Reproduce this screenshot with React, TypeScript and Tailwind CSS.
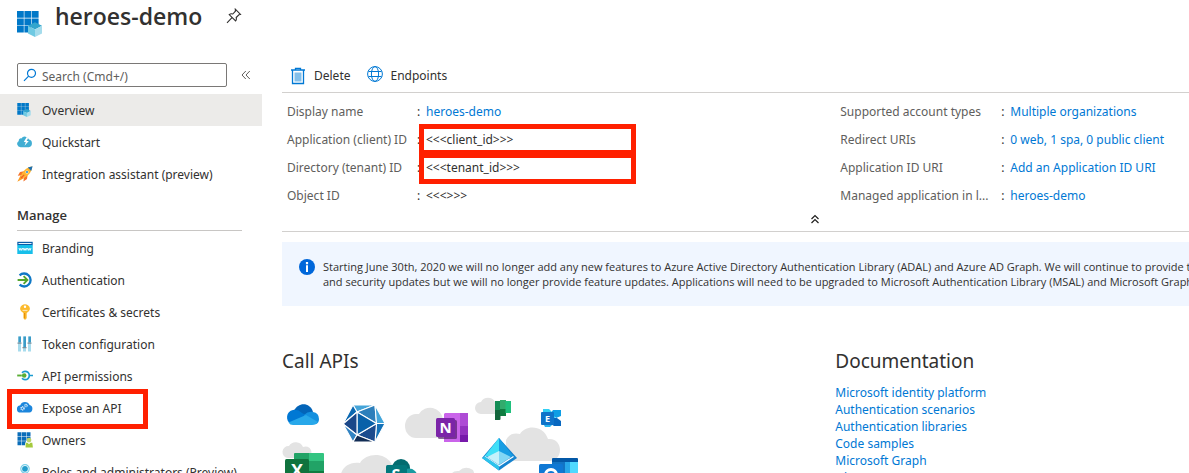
import type { ReactNode } from "react";

function AppGrid({ className }: { className?: string }) {
  return (
    <svg viewBox="0 0 25 26" className={className} aria-hidden="true">
      <path fill="#0078c8" d="M0 0h6.800v6.800H0zM7.400 0h6.800v6.800H7.400zM14.800 0h6.800v6.800h-6.800zM0 7.400h6.800v6.800H0zM7.400 7.400h6.800v6.800H7.400zM14.800 7.400h6.800v6.800h-6.800zM0 14.800h6.800v6.800H0zM7.400 14.800h6.800v6.800H7.400z" />
      <path fill="#32a5cd" d="M18 11.200l7 3.600-7 3.600-7-3.600z" />
      <path fill="#6fc9e2" d="M11 14.800l7 3.600V26l-7-3.400z" />
      <path fill="#a5dcec" d="M25 14.800l-7 3.600V26l7-3.400z" />
    </svg>
  );
}

function QuickstartIcon() {
  return (
    <svg viewBox="0 0 16 16" className="size-4" aria-hidden="true">
      <path fill="#41aed3" d="M3.600 13.200A3.400 3.400 0 0 1 1.800 6.900 2.100 2.100 0 0 1 4.300 4.400 4.400 4.400 0 0 1 12 5.600a3.900 3.900 0 0 1-.2 7.600z" />
      <path fill="#fff" d="M9.500 3.200L6.800 8h2l-1.200 3.800L11.800 7H9.600l1.900-3.800z" />
    </svg>
  );
}

function RocketIcon() {
  return (
    <svg viewBox="0 0 16 16" className="size-4" aria-hidden="true">
      <path fill="#f5742c" d="M7 5.200L3 6 .8 9.800l4-.6zM10.600 9L10 13l-3.600 2.600.6-4z" />
      <path fill="#fb9d24" d="M3.800 9L.3 15.800 7.400 12z" />
      <path fill="#ffb52f" d="M15.200.6C10 1.300 6.400 4.400 4 9.300l2.800 2.800C11.600 9.700 14.600 6 15.200.6z" />
      <path fill="#1f6fae" d="M15.600.2l-4.800 1.400 3.400 3.400z" />
      <circle cx="10" cy="6" r="1.500" fill="#fff" />
      <circle cx="10" cy="6" r="1" fill="#1c86ca" />
      <path stroke="#f0592b" strokeWidth="1.200" d="M4 12.200l3.200-3.400" />
    </svg>
  );
}

function BrandingIcon() {
  return (
    <svg viewBox="0 0 16 16" className="size-4" aria-hidden="true">
      <path fill="#0b5ca8" d="M.3 1.800h15.400v3.500H.3z" />
      <path fill="#e8f4fb" d="M1.500 3h13v1h-13z" />
      <path fill="#17bfea" d="M.3 5h15.400v9H.3z" />
      <path fill="none" stroke="#fff" strokeWidth=".9" d="M2 8l.9 2.400.9-2.100.9 2.100L5.600 8M6.200 8l.9 2.400L8 8.300l.9 2.100.9-2.400M10.400 8l.9 2.400.9-2.100.9 2.100.9-2.400" />
    </svg>
  );
}

function AuthIcon() {
  return (
    <svg viewBox="0 0 16 16" className="size-4" fill="none" aria-hidden="true">
      <path stroke="#0f78c6" strokeWidth="2.300" d="M2.600 3.300a6.500 6.500 0 1 1 0 9.400" />
      <path stroke="#54a52d" strokeWidth="1.900" d="M.6 8h9.600M6.600 4.200L10.400 8l-3.800 3.800" />
    </svg>
  );
}

function KeyIcon() {
  return (
    <svg viewBox="0 0 16 16" className="size-4" aria-hidden="true">
      <path fill="#fcba2d" fillRule="evenodd" d="M5 1.200Q8 -.8 11 1.200Q13.600 3.300 12.600 6Q12 7.500 9.700 8.900V14.200L8 16 6.400 14.300V8.900Q4 7.500 3.400 6Q2.400 3.300 5 1.200ZM8 1.600a1.200 1.200 0 1 0 0 2.400 1.200 1.200 0 0 0 0-2.400Z" />
      <path fill="#fff" d="M5.500 5.900h5v.7h-5z" />
      <path fill="#e08600" d="M7.200 9h.9v5.300h-.9z" />
    </svg>
  );
}

function TokenIcon() {
  return (
    <svg viewBox="0 0 16 16" className="size-4" aria-hidden="true">
      <path fill="#a8dced" d="M1 .5h3v15H1zM6 .5h3v15H6zM11 .5h3v15h-3z" />
      <path fill="#3c9cc8" d="M1.500.5H4v6H1.500zM6.500.5H9v10.800H6.500zM11.500.5H14v6h-2.500z" />
      <path fill="#7c8f9c" d="M.5 6.500h4v1.200h-4zM5.500 11h4v1.200h-4zM10.500 6.500h4v1.200h-4z" />
    </svg>
  );
}

function PermissionsIcon() {
  return (
    <svg viewBox="0 0 16 16" className="size-4" fill="none" aria-hidden="true">
      <path stroke="#1b9bd0" strokeWidth="1.700" d="M5 4.700a4.200 4.200 0 1 1 0 5.600M12 7.500h4" />
      <path stroke="#5aae35" strokeWidth="1.900" d="M.2 7.500h4.600" />
      <circle cx="7.200" cy="7.500" r="2.300" fill="#5aae35" />
    </svg>
  );
}

function ExposeIcon() {
  return (
    <svg viewBox="0 0 16 16" className="size-4" aria-hidden="true">
      <path fill="#1c86dc" d="M3.700 12.500A3.600 3.600 0 0 1 3.300 5.300 5 5 0 0 1 12.600 5.100 3.800 3.800 0 0 1 12.300 12.500z" />
      <circle cx="5.500" cy="8.400" r="1.500" fill="none" stroke="#fff" strokeWidth="1.300" strokeDasharray="1 .5" />
      <circle cx="9" cy="5.500" r="1.200" fill="none" stroke="#cde9fa" strokeWidth="1.200" strokeDasharray=".9 .4" />
    </svg>
  );
}

function OwnersIcon() {
  return (
    <svg viewBox="0 0 16 16" className="size-4" aria-hidden="true">
      <path fill="#0a6db9" d="M.5.300h4v4h-4zM5 .3h4v4H5zM9.500.3h4v4h-4zM.5 4.800h4v4h-4zM5 4.800h4v4H5zM9.500 4.800h4v4h-4zM.5 9.300h4v4h-4zM5 9.300h4v4H5z" />
      <path fill="#fff" d="M8 15.500V11l2-2 5 1 1 5.500z" />
      <circle cx="12" cy="8.100" r="2.400" fill="#b9d36a" />
      <path fill="#a5ca3d" d="M8.600 10.800h2L12 12.200l1.400-1.400h1.900l.6 4.700H8.600z" />
    </svg>
  );
}

function RolesIcon() {
  return (
    <svg viewBox="0 0 16 16" className="size-4" aria-hidden="true">
      <circle cx="8" cy="4.800" r="4.200" fill="none" stroke="#79cfe8" strokeWidth="1.200" />
      <circle cx="8" cy="4.800" r="2.900" fill="#229dcc" />
      <path fill="#50bfe0" d="M3 16c0-5 2-7 5-7s5 2 5 7z" />
    </svg>
  );
}

type NavEntry = { label: string; icon: ReactNode; active?: boolean; marked?: boolean };

const topNav: NavEntry[] = [
  { label: "Overview", icon: <AppGrid className="size-[14px]" />, active: true },
  { label: "Quickstart", icon: <QuickstartIcon /> },
  { label: "Integration assistant (preview)", icon: <RocketIcon /> },
];

const manageNav: NavEntry[] = [
  { label: "Branding", icon: <BrandingIcon /> },
  { label: "Authentication", icon: <AuthIcon /> },
  { label: "Certificates & secrets", icon: <KeyIcon /> },
  { label: "Token configuration", icon: <TokenIcon /> },
  { label: "API permissions", icon: <PermissionsIcon /> },
  { label: "Expose an API", icon: <ExposeIcon />, marked: true },
  { label: "Owners", icon: <OwnersIcon /> },
  { label: "Roles and administrators (Preview)", icon: <RolesIcon /> },
];

function NavList({ items }: { items: NavEntry[] }) {
  return (
    <ul>
      {items.map((item) => (
        <li key={item.label} className="relative">
          <a
            href="#"
            aria-current={item.active ? "page" : undefined}
            className={`flex h-8 items-center gap-[9px] pl-[17px] whitespace-nowrap ${item.active ? "bg-[#ecebe9]" : ""}`}
          >
            <span className="flex w-4">{item.icon}</span>
            <span className="pt-[2px]">{item.label}</span>
          </a>
          {item.marked && (
            <span className="pointer-events-none absolute -top-[3px] -bottom-[5px] left-[7px] w-[141px] border-5 border-[#ff2000]" />
          )}
        </li>
      ))}
    </ul>
  );
}

type Property = { label: string; value: string; link?: boolean; marked?: boolean };

const leftProps: Property[] = [
  { label: "Display name", value: "heroes-demo", link: true },
  { label: "Application (client) ID", value: "<<<client_id>>>", marked: true },
  { label: "Directory (tenant) ID", value: "<<<tenant_id>>>", marked: true },
  { label: "Object ID", value: "<<<>>>" },
];

const rightProps: Property[] = [
  { label: "Supported account types", value: "Multiple organizations", link: true },
  { label: "Redirect URIs", value: "0 web, 1 spa, 0 public client", link: true },
  { label: "Application ID URI", value: "Add an Application ID URI", link: true },
  { label: "Managed application in l...", value: "heroes-demo", link: true },
];

function PropertyList({ items, wide }: { items: Property[]; wide?: boolean }) {
  return (
    <dl className="pl-[5px]">
      {items.map((p, i) => (
        <div key={p.label} className="flex h-7 items-center whitespace-nowrap">
          <dt className={`text-[#605e5c] ${wide ? "w-[161px]" : "w-[130px]"}`}>{p.label}</dt>
          <span className="w-[9px]">:</span>
          <dd className="relative">
            {p.link ? <a href="#" className="text-[#0078d4]">{p.value}</a> : p.value}
            {p.marked && (
              <span
                className={`pointer-events-none absolute -left-[7px] h-[31px] w-[217px] border-5 border-[#ff2000] ${i === 1 ? "-top-2" : "-top-[7px]"}`}
              />
            )}
          </dd>
        </div>
      ))}
    </dl>
  );
}

function ServicesArt() {
  return (
    <svg viewBox="282 395 300 100" className="h-[100px] w-[300px]" fontFamily="Open Sans, sans-serif" fontWeight="700" fill="#fff" role="img" aria-label="Microsoft services">
      <g fill="#e3e3e3">
        <path d="M416 438a11 12 0 0 1 0-24h3a13 13 0 0 1 24 5v19z" />
        <path d="M288 458a6 6 0 0 1 1-12 8 8 0 0 1 14 1 6 6 0 0 1 5 11z" />
        <path d="M340 480c0-11 8-19 20-17 6-10 24-11 31 0l8 17z" />
        <path d="M481 414a6 6 0 0 1 0-12 8 8 0 0 1 14 0v12z" />
        <path d="M506 461V440q4-8 14-6c5-9 23-10 28 5 8-1 12 5 12 11 0 7-5 11-11 11z" />
        <path d="M450 480q0-10 9-9 6-6 14-1l4 10z" />
      </g>

      <path fill="#0364b8" d="M294 411c4-9 16-9 19 1l-6 6-13-3z" />
      <path fill="#0078d4" d="M293 410q5-1 9 3l7 4-18 7c-6-3-5-13 2-14z" />
      <path fill="#1490df" d="M304 415q4-4 9-3 6 1 6 7 0 4-3 5l-12-7z" />
      <path fill="#28a8ea" d="M288.500 422.500L306 415l12 7c-1 2-3 3-6 3h-19q-3 0-4.500-2.500z" />

      <g stroke="#fff" strokeWidth="1.100" strokeLinejoin="round">
        <path fill="#45a4d8" d="M353 405h22l-18 7z" />
        <path fill="#0b68b1" d="M353 405l4 7-14 12z" />
        <path fill="#2c7fbb" d="M357 412l18-7 1.500 18.500z" />
        <path fill="#42a5da" d="M375 405l10 18.500h-8.500z" />
        <path fill="#1472b8" d="M385 423.500L375 442l1.500-18.500z" />
        <path fill="#1a4b8e" d="M376.500 423.500L375 442l-18-7z" />
        <path fill="#0961a9" d="M357 412l19.500 11.500L357 435z" />
        <path fill="#1a4789" d="M357 412v23l-14-11z" />
        <path fill="#3283c2" d="M343 424l14 11-4 7z" />
        <path fill="#122d55" d="M357 435l18 7h-22z" />
      </g>

      <path fill="#21a366" d="M294 454q0-1 1-1h14v8h-15z" />
      <path fill="#33c481" d="M309 453h14q1 0 1 1v7h-15z" />
      <path fill="#107c41" d="M294 461h15v30h-15z" />
      <path fill="#21a366" d="M309 461h15v10h-15z" />
      <path fill="#107c41" d="M309 471h15v20h-15z" />
      <rect x="285" y="459" width="24" height="25" rx="1.500" fill="#10733e" />
      <text x="297" y="477" fontSize="18" textAnchor="middle">X</text>

      <circle cx="401" cy="468" r="9" fill="#036c70" />
      <circle cx="409" cy="477" r="8.500" fill="#1a9ba1" />
      <rect x="386" y="465" width="21" height="22" rx="1.500" fill="#03787c" />
      <text x="396" y="481" fontSize="16" textAnchor="middle">S</text>

      <path fill="#ca64ea" d="M445 413h15v29h-16v-28z" />
      <path fill="#ae4bd5" d="M460 413h8v13h-8z" />
      <path fill="#9332bf" d="M460 426h8v9h-8z" />
      <path fill="#7719aa" d="M460 435h8v7h-8z" />
      <rect x="438" y="420" width="19" height="19" rx="1.500" fill="#4b1766" opacity=".65" />
      <rect x="436" y="418" width="19" height="19" rx="1.500" fill="#7b24a8" />
      <text x="445.500" y="433" fontSize="15" textAnchor="middle">N</text>

      <path fill="#12653b" d="M495 401h5.500v18q0 1-1 1H495z" />
      <path fill="#148d56" d="M495 401h5.500v9H495z" />
      <path fill="#32ab6d" d="M500 400h6v9h-6z" />
      <path fill="#107c41" d="M500 409h6v7h-6z" />
      <path fill="#20c07d" d="M505.500 401h5.500v12h-5.500z" />

      <path fill="#32d0f5" d="M543 409h6l6 6v6h-12z" />
      <path fill="#28b5ee" d="M544 425h8l-2 2h-5z" />
      <path fill="#0e9ee5" d="M553 410h8v6l-5 2-5-5z" />
      <path fill="#0868c0" d="M554 418h3l4 3v5h-7l-3-2z" />
      <rect x="541" y="412" width="13" height="13" rx="1" fill="#0f73c9" />
      <text x="547.500" y="422" fontSize="9" textAnchor="middle">E</text>

      <path fill="#1683cf" d="M499 438l18 20-18 12.500L482 458z" />
      <path fill="#40dff7" d="M499 438v16l-15 3z" />
      <path fill="#189ee4" d="M499 438l15 19-15-3z" />
      <path fill="#c5f1fb" d="M499 451v14l-12-8z" />
      <path fill="#82d7f5" d="M499 451l12 6-12 8z" />
      <path fill="none" stroke="#fff" strokeWidth="1.200" d="M485 456.500l14 9.500 14.500-9.500" />
      <path fill="#2cc3ec" d="M482 458l3-1.500 14 9.500v4.500z" />

      <path fill="#0358a7" d="M552 459q0-1 1-1h24q1 0 1 1v5h-26z" />
      <path fill="#1274c4" d="M552 462h13v25h-13z" />
      <path fill="#28a8ea" d="M565 462h13v25h-13z" />
      <path fill="#50d9ff" d="M570 462h8v15h-8z" />
      <rect x="539" y="464" width="24" height="24" rx="1.500" fill="#0f78d4" />
      <circle cx="551" cy="475" r="5.500" fill="none" stroke="#fff" strokeWidth="3" />
    </svg>
  );
}

const docs = [
  "Microsoft identity platform",
  "Authentication scenarios",
  "Authentication libraries",
  "Code samples",
  "Microsoft Graph",
  "Glossary",
];

export default function App() {
  return (
    <div className="flex h-screen flex-col overflow-hidden bg-white font-['Noto_Sans','Open_Sans',sans-serif] text-[12px] leading-4 text-[#323130]">
      <header className="flex h-[63px] shrink-0 items-start pl-[17px]">
        <AppGrid className="mt-[11px] h-[26px] w-[25px]" />
        <h1 className="ml-[13px] font-['Open_Sans',sans-serif] text-[23px] leading-8 font-semibold">heroes-demo</h1>
        <button type="button" aria-label="Pin" className="mt-2 ml-6">
          <svg viewBox="0 0 16 16" className="size-4" fill="none" stroke="#323130" strokeWidth="1.100" aria-hidden="true">
            <path d="M9.300 1.200l5.200 5.200-1.600.4-2.700 2.700q.6 2.200-.6 3.500L3.200 6.600q1.500-1.200 3.600-.6l2.600-2.800zM6 9.700L1 14.800" />
          </svg>
        </button>
      </header>

      <div className="flex min-h-0 flex-1">
        <nav className="w-[262px] shrink-0 overflow-hidden">
          <div className="mb-[7px] flex items-center pl-[17px]">
            <label className="flex h-6 w-[210px] items-center gap-[5px] rounded-xs border border-[#7a7876] pl-[5px]">
              <svg viewBox="0 0 14 14" className="size-[14px]" fill="none" stroke="#0078d4" strokeWidth="1.200" aria-hidden="true">
                <circle cx="8.500" cy="5.300" r="4" />
                <path d="M5.600 8.200L1 12.800" />
              </svg>
              <input type="text" aria-label="Search" placeholder="Search (Cmd+/)" className="h-[22px] min-w-0 flex-1 pt-[2px] outline-none placeholder:text-[#605e5c]" />
            </label>
            <button type="button" aria-label="Collapse menu" className="ml-[14px]">
              <svg viewBox="0 0 10 10" className="size-[10px]" fill="none" stroke="#605e5c" aria-hidden="true">
                <path d="M4.800 1L1 5l3.800 4M8.800 1L5 5l3.800 4" />
              </svg>
            </button>
          </div>
          <NavList items={topNav} />
          <h2 className="mr-5 ml-[17px] flex h-[41px] items-center border-b border-[#c8c6c4] pt-[9px] font-['Open_Sans',sans-serif] text-[13px] font-semibold">Manage</h2>
          <div className="pt-[1px]">
            <NavList items={manageNav} />
          </div>
        </nav>

        <main className="min-w-0 flex-1 overflow-hidden pl-5">
          <div className="flex h-[30px] items-center gap-4 border-b border-[#d2d0ce] pb-1 pl-2">
            <button type="button" className="flex items-center gap-2">
              <svg viewBox="0 0 16 18" className="h-[18px] w-4" aria-hidden="true">
                <path fill="none" stroke="#0078d4" strokeWidth="1.300" d="M1 3h14M5.500 3V1.300h5V3M2.500 3.500v13h11v-13" />
                <path fill="#83bfea" d="M4.500 5.500h7v9h-7z" />
              </svg>
              Delete
            </button>
            <button type="button" className="flex items-center gap-2">
              <svg viewBox="0 0 16 16" className="-mt-1 size-4" fill="none" stroke="#0078d4" aria-hidden="true">
                <circle cx="8" cy="8" r="7.400" />
                <ellipse cx="8" cy="8" rx="3.600" ry="7.400" />
                <path d="M1.500 5.500h13M1.500 10.500h13" />
              </svg>
              Endpoints
            </button>
          </div>

          <section className="border-b border-[#d2d0ce] pt-[5px]">
            <div className="grid grid-cols-[61fr_39fr]">
              <PropertyList items={leftProps} />
              <PropertyList items={rightProps} wide />
            </div>
            <div className="flex h-[21px] items-center pb-1 pl-[528px]">
              <button type="button" aria-label="Collapse essentials">
                <svg viewBox="0 0 10 10" className="size-[10px]" fill="none" stroke="#201f1e" strokeWidth="1.200" aria-hidden="true">
                  <path d="M1.500 5L5 1.500 8.500 5M1.500 9L5 5.500 8.500 9" />
                </svg>
              </button>
            </div>
          </section>

          <div className="mt-[10px] flex h-16 gap-2 overflow-hidden bg-[#f0f6ff] pt-[17px] pl-[17px]">
            <svg viewBox="0 0 16 16" className="size-4 shrink-0" aria-hidden="true">
              <circle cx="8" cy="8" r="8" fill="#0067da" />
              <path fill="#fff" d="M6.900 3h2.200v2.200H6.900zM7 6.300h2V13H7z" />
            </svg>
            <p className="font-['Open_Sans',sans-serif] text-[11px] leading-[15px] whitespace-nowrap">
              Starting June 30th, 2020 we will no longer add any new features to Azure Active Directory Authentication Library (ADAL) and Azure AD Graph. We will continue to provide technical support
              <br />
              and security updates but we will no longer provide feature updates. Applications will need to be upgraded to Microsoft Authentication Library (MSAL) and Microsoft Graph.
            </p>
          </div>

          <div className="mt-10 grid grid-cols-[61fr_39fr]">
            <section>
              <h2 className="text-[19px] leading-[30px]">Call APIs</h2>
              <div className="mt-[19px]">
                <ServicesArt />
              </div>
            </section>
            <section>
              <h2 className="text-[19px] leading-[30px]">Documentation</h2>
              <ul className="mt-2 leading-[17px]">
                {docs.map((doc) => (
                  <li key={doc}>
                    <a href="#" className="text-[#0078d4]">{doc}</a>
                  </li>
                ))}
              </ul>
            </section>
          </div>
        </main>
      </div>
    </div>
  );
}
